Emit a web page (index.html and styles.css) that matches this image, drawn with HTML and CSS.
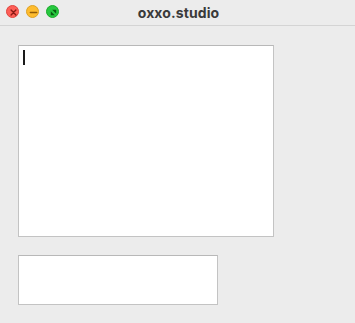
FILE: index.html
```html
<!DOCTYPE html>
<html>
<head>
<meta charset="utf-8">
<link rel="stylesheet" href="styles.css">
</head>
<body>
<div class="window">
  <header class="titlebar">
    <div class="lights">
      <span class="light red">
        <svg viewBox="0 0 13 13" width="13" height="13"><path d="M4.1 4.1 L8.9 8.9 M8.9 4.1 L4.1 8.9" stroke="#8a1a14" stroke-width="1.4" stroke-linecap="round"/></svg>
      </span>
      <span class="light yellow">
        <svg viewBox="0 0 13 13" width="13" height="13"><path d="M3.4 6.5 H9.6" stroke="#8f5a06" stroke-width="1.5" stroke-linecap="round"/></svg>
      </span>
      <span class="light green">
        <svg viewBox="0 0 13 13" width="13" height="13"><path d="M3.8 9.2 L3.8 5.2 L7.8 9.2 Z M9.2 3.8 L9.2 7.8 L5.2 3.8 Z" fill="#0b5a12"/></svg>
      </span>
    </div>
    <div class="title">oxxo.studio</div>
  </header>
  <main class="content">
    <div class="field big"><span class="caret"></span></div>
    <div class="field small"></div>
  </main>
</div>
</body>
</html>
```

FILE: styles.css
```css
html, body {
  margin: 0;
  padding: 0;
  background: #ececec;
}
.window {
  width: 355px;
  height: 323px;
  background: #ececec;
  font-family: "Inter", "Noto Sans", "Liberation Sans", sans-serif;
}
.titlebar {
  position: relative;
  height: 25px;
  border-bottom: 1px solid #d4d4d4;
  background: #ececec;
  display: flex;
  align-items: center;
  justify-content: center;
}
.lights {
  position: absolute;
  left: 6px;
  top: 5px;
  display: flex;
  gap: 7px;
}
.light {
  width: 13px;
  height: 13px;
  border-radius: 50%;
  display: block;
  box-sizing: border-box;
}
.light svg { display: block; }
.red { background: #fe5f57; border: 0.5px solid #e0443e; }
.yellow { background: #febc2e; border: 0.5px solid #dea123; }
.green { background: #28c840; border: 0.5px solid #1aab29; }
.title {
  font-size: 14px;
  font-weight: 700;
  color: #3a3a3a;
  letter-spacing: 0.1px;
  margin-top: -1px;
  margin-left: 2px;
}
.content {
  padding: 19px 0 0 18px;
  display: flex;
  flex-direction: column;
  align-items: flex-start;
  gap: 18px;
}
.field {
  box-sizing: border-box;
  background: #ffffff;
  border: 1px solid #c3c3c3;
  border-top-color: #b8b8b8;
}
.big {
  width: 256px;
  height: 192px;
  padding: 4px 0 0 4px;
}
.small {
  width: 200px;
  height: 50px;
}
.caret {
  display: block;
  width: 1.5px;
  height: 15px;
  background: #1a1a1a;
}
```
